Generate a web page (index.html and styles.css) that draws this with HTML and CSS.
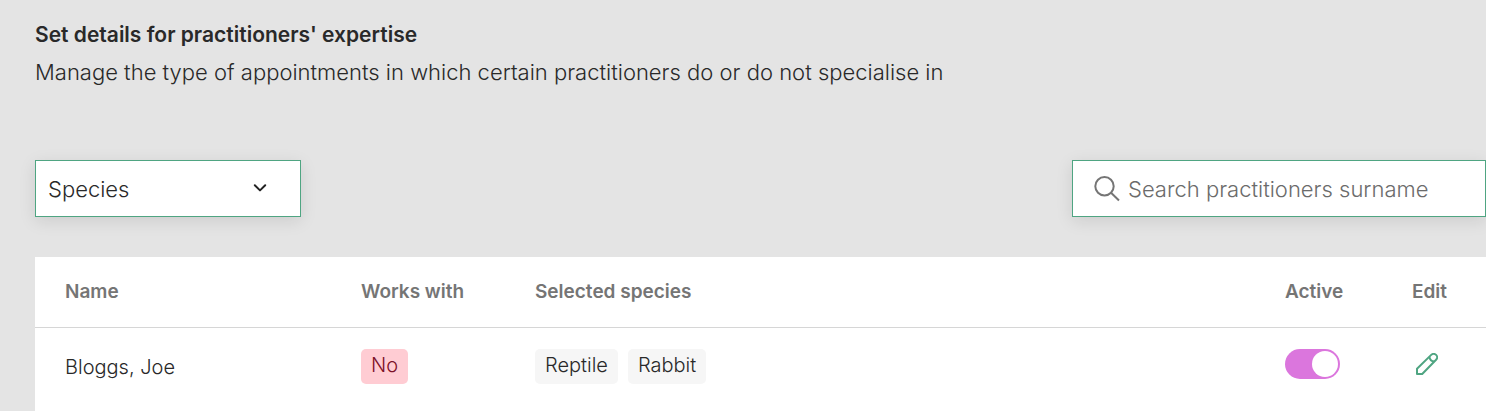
FILE: index.html
```html
<!DOCTYPE html>
<html lang="en">
<head>
<meta charset="utf-8">
<meta name="viewport" content="width=device-width, initial-scale=1">
<title>Practitioner expertise</title>
<link rel="stylesheet" href="styles.css">
</head>
<body>
<main class="page">
  <header class="intro">
    <h1 class="intro-title">Set details for practitioners' expertise</h1>
    <p class="intro-text">Manage the type of appointments in which certain practitioners do or do not specialise in</p>
  </header>

  <div class="filters">
    <div class="field field-select">
      <select class="select" aria-label="Filter by">
        <option>Species</option>
      </select>
      <svg class="chevron" viewBox="0 0 14 10" aria-hidden="true"><path d="M1.8 2.2 7 7.4l5.2-5.2"/></svg>
    </div>
    <label class="field field-search">
      <svg class="search-icon" viewBox="0 0 26 26" aria-hidden="true"><circle cx="10.5" cy="10.3" r="9.2"/><path d="M17 16.800 25 24.400"/></svg>
      <input class="search" type="text" placeholder="Search practitioners surname" aria-label="Search practitioners surname">
    </label>
  </div>

  <table class="table">
    <thead>
      <tr>
        <th class="col-name" scope="col">Name</th>
        <th class="col-works" scope="col">Works with</th>
        <th scope="col">Selected species</th>
        <th class="col-active" scope="col">Active</th>
        <th class="col-edit" scope="col">Edit</th>
      </tr>
    </thead>
    <tbody>
      <tr>
        <td class="col-name">Bloggs, Joe</td>
        <td><div class="tags"><span class="tag tag-no">No</span></div></td>
        <td><div class="tags"><span class="tag">Reptile</span><span class="tag">Rabbit</span></div></td>
        <td><input class="toggle" type="checkbox" role="switch" aria-label="Active" checked></td>
        <td>
          <button class="edit" type="button" aria-label="Edit Bloggs, Joe">
            <svg class="pencil" viewBox="0 0 22 22" aria-hidden="true"><path d="M1 21v-5.200L15.200 1.900a3.400 3.400 0 0 1 4.900 4.900L6.200 21Z"/><path d="M13.400 3.800c.4 2.700 2 4.400 4.800 4.800"/></svg>
          </button>
        </td>
      </tr>
    </tbody>
  </table>
</main>
</body>
</html>
```

FILE: styles.css
```css
* {
  box-sizing: border-box;
}

body {
  margin: 0;
  background: #e4e4e4;
  color: #292929;
  font-family: Inter, "Open Sans", sans-serif;
  font-weight: 300;
}

.page {
  padding: 20px 0 0 35px;
}

.intro-title {
  margin: 0;
  font-size: 21px;
  font-weight: 600;
  line-height: 30px;
}

.intro-text {
  margin: 7px 0 0;
  font-size: 22px;
  line-height: 30px;
}

.filters {
  display: flex;
  justify-content: space-between;
  margin: 73px 0 40px;
}

.field {
  height: 57px;
  background: #fff;
  border: 1px solid #4fa582;
  box-shadow: 0 4px 16px rgba(0, 0, 0, 0.1);
}

.field-select {
  position: relative;
  width: 266px;
}

.select {
  width: 100%;
  height: 100%;
  padding: 0 60px 0 12px;
  appearance: none;
  border: 0;
  background: none;
  color: #292929;
  font: inherit;
  font-size: 22px;
}

.chevron {
  position: absolute;
  top: 22px;
  right: 33px;
  width: 14px;
  height: 10px;
  fill: none;
  stroke: #222;
  stroke-width: 2;
  stroke-linecap: round;
  stroke-linejoin: round;
  pointer-events: none;
}

.field-search {
  display: flex;
  align-items: center;
  gap: 8px;
  width: 414px;
  padding: 0 20px 0 21px;
}

.search-icon {
  flex: none;
  width: 26px;
  height: 26px;
  fill: none;
  stroke: #757575;
  stroke-width: 2;
}

.search {
  flex: 1;
  min-width: 0;
  padding: 0;
  border: 0;
  background: none;
  color: #292929;
  font: inherit;
  font-size: 22px;
}

.search::placeholder {
  color: #6b6b6b;
  opacity: 1;
}

.table {
  width: 100%;
  table-layout: fixed;
  border-collapse: collapse;
  background: #fff;
  text-align: left;
}

.table th {
  height: 70px;
  padding: 0;
  border-bottom: 1px solid #d6d6d6;
  color: #757575;
  font-size: 19px;
  font-weight: 600;
}

.table td {
  height: 90px;
  padding: 21px 0 0;
  font-size: 20px;
  line-height: 36px;
  vertical-align: top;
}

.table .col-name {
  width: 326px;
  padding-left: 30px;
}

.col-works {
  width: 174px;
}

.col-active {
  width: 127px;
}

.col-edit {
  width: 74px;
}

.tags {
  display: flex;
  gap: 10px;
}

.tag {
  padding: 0 10px 3px;
  border-radius: 5px;
  background: #f6f6f6;
  line-height: 32px;
}

.tag-no {
  background: #ffccd3;
  color: #7d1128;
}

.toggle {
  display: flex;
  align-items: center;
  width: 55px;
  height: 30px;
  margin: 0;
  padding: 2px;
  appearance: none;
  border-radius: 15px;
  background: #ccc;
}

.toggle::before {
  content: "";
  width: 26px;
  height: 26px;
  border-radius: 50%;
  background: #fff;
}

.toggle:checked {
  justify-content: flex-end;
  background: #db76dd;
}

.edit {
  display: block;
  padding: 4px;
  border: 0;
  background: none;
}

.pencil {
  display: block;
  width: 22px;
  height: 22px;
  fill: none;
  stroke: #4fa582;
  stroke-width: 2;
  stroke-linejoin: round;
}
```
